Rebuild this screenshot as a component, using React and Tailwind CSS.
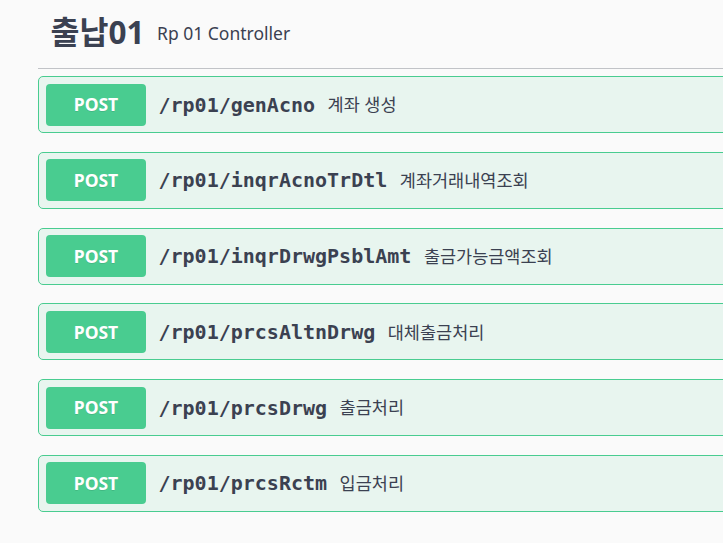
import React from "react";

const ops = [
  { path: "/rp01/genAcno", desc: "계좌 생성" },
  { path: "/rp01/inqrAcnoTrDtl", desc: "계좌거래내역조회" },
  { path: "/rp01/inqrDrwgPsblAmt", desc: "출금가능금액조회" },
  { path: "/rp01/prcsAltnDrwg", desc: "대체출금처리" },
  { path: "/rp01/prcsDrwg", desc: "출금처리" },
  { path: "/rp01/prcsRctm", desc: "입금처리" },
];

const sans = "font-['Noto_Sans','Noto_Sans_CJK_KR',sans-serif]";

const OpBlock = ({ path, desc }) => (
  <div className="flex items-center h-[57px] mb-[18.75px] px-[7px] bg-[#e8f5ef] border border-[#49cc90] rounded-[5px]">
    <span
      className={`${sans} flex items-center justify-center w-[100px] h-[42px] shrink-0 rounded-[4px] bg-[#49cc90] text-white text-[17.5px] font-bold [text-shadow:0_1px_0_rgba(0,0,0,0.1)]`}
    >
      POST
    </span>
    <span className="px-[12.5px] font-['DejaVu_Sans_Mono',monospace] text-[20px] font-bold text-[#3b4151]">
      {path}
    </span>
    <span className={`${sans} text-[17.5px] text-[#3b4151]`}>{desc}</span>
  </div>
);

export default function App() {
  return (
    <div className="w-[723px] h-[543px] overflow-hidden bg-[#fafafa]">
      <div className="ml-[38px] w-[760px]">
        <div className="flex items-center h-[69px] border-b border-[#c1c3c7] px-[12.5px]">
          <h3 className={`${sans} mb-[5px] text-[31.5px] font-bold text-[#3b4151]`}>
            출납01
          </h3>
          <small className={`${sans} mb-[2px] px-[12.5px] text-[17.5px] text-[#3b4151]`}>
            Rp 01 Controller
          </small>
        </div>
        <div className="mt-[7px]">
          {ops.map((op) => (
            <OpBlock key={op.path} {...op} />
          ))}
        </div>
      </div>
    </div>
  );
}
